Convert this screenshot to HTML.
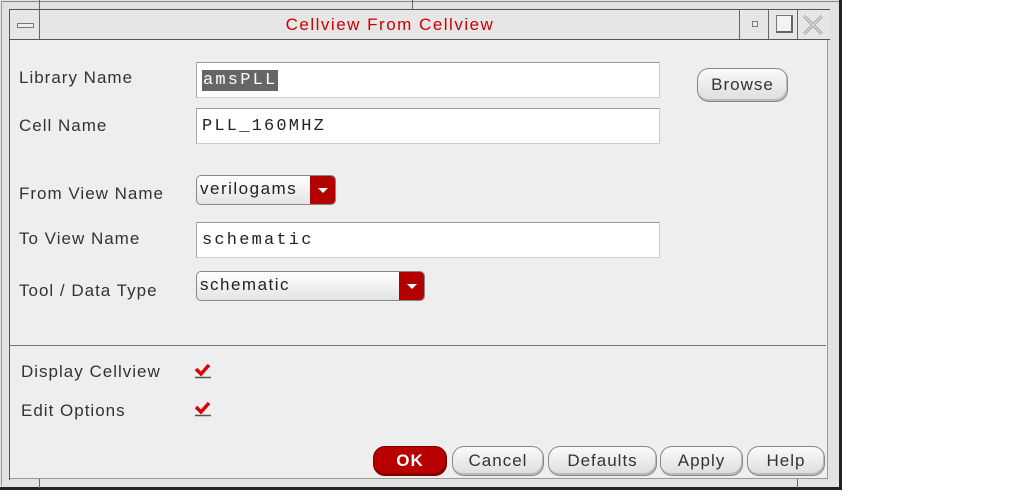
<!DOCTYPE html>
<html><head><style>
body{margin:0;width:1013px;height:497px;background:#fff;position:relative;overflow:hidden;font-family:"Liberation Sans",sans-serif;}
.a{position:absolute;box-sizing:border-box;}
.lbl{position:absolute;font-size:17px;color:#333;letter-spacing:1px;}
.fld{position:absolute;background:#fff;border:1px solid #ccc;border-top-color:#999;border-left-color:#aaa;box-sizing:border-box;font-family:"Liberation Mono",monospace;font-size:17px;letter-spacing:2.2px;color:#222;padding:10px 0 0 5px;}
.btn{position:absolute;box-sizing:border-box;border:1px solid #888;border-radius:12px;background:linear-gradient(#fafafa,#ddd);font-size:17px;letter-spacing:1px;color:#333;text-align:center;line-height:27px;box-shadow:inset -1px -2px 0 #bbb;}
.combo{position:absolute;box-sizing:border-box;border:1px solid #888;border-radius:5px;background:linear-gradient(#fff,#e4e4e4);font-size:17px;letter-spacing:1.5px;color:#222;padding:3px 0 0 3px;overflow:hidden;}
.combo .ar{position:absolute;right:0;top:0;bottom:0;width:25px;background:#b30000;}
.combo .ar:after{content:"";position:absolute;left:8px;top:12px;border-left:5px solid transparent;border-right:5px solid transparent;border-top:5px solid #fff;}
.chk{position:absolute;width:17px;height:17px;}
</style></head><body>
<div class="a" style="left:0;top:0;width:842px;height:490px;background:#e2e2e2;border-right:3px solid #222;border-bottom:3px solid #222;"></div>
<div class="a" style="top:1px;left:1px;width:838px;height:1px;background:#888"></div>
<div class="a" style="left:1px;top:1px;width:1px;height:485px;background:#999"></div>
<div class="a" style="left:9px;top:9px;width:821px;height:1px;background:#555"></div>
<div class="a" style="left:9px;top:9px;width:1px;height:471px;background:#555"></div>
<div class="a" style="left:9px;top:39px;width:821px;height:1px;background:#555"></div>
<div class="a" style="left:10px;top:40px;width:818px;height:439px;background:#eeeeee;border-right:1px solid #999;border-bottom:1px solid #999;"></div>
<div class="a" style="left:10px;top:10px;width:819px;height:29px;background:#e6e6e6"></div>
<div class="a" style="left:39px;top:10px;width:1px;height:29px;background:#666"></div>
<div class="a" style="left:17px;top:23px;width:17px;height:5px;background:#eee;border:1px solid #777"></div>
<div class="a" style="left:39px;top:0;width:1px;height:10px;background:#666"></div>
<div style="position:absolute;left:0;width:780px;top:15px;text-align:center;color:#c00;font-size:17px;letter-spacing:1.5px;">Cellview From Cellview</div>
<div class="a" style="left:739px;top:10px;width:1px;height:29px;background:#666"></div>
<div class="a" style="left:768px;top:10px;width:1px;height:29px;background:#666"></div>
<div class="a" style="left:797px;top:10px;width:1px;height:29px;background:#666"></div>
<div class="a" style="left:752px;top:21px;width:6px;height:6px;background:#eee;border:1px solid #777"></div>
<div class="a" style="left:776px;top:15px;width:17px;height:18px;border:1px solid #777;border-right:2px solid #666;border-bottom:2px solid #666;background:#f2f2f2"></div>
<svg class="a" style="left:800px;top:12px" width="26" height="26"><path d="M4 4L22 22M22 4L4 22" stroke="#999" stroke-width="3"/><path d="M4 4L22 22M22 4L4 22" stroke="#eee" stroke-width="1"/></svg>
<div class="a" style="left:412px;top:0;width:1px;height:10px;background:#666"></div>

<div class="lbl" style="left:19px;top:68px">Library Name</div>
<div class="fld" style="left:196px;top:62px;width:464px;height:36px;padding-top:8px"><span style="background:#666;color:#fff;padding:1px 1px">amsPLL</span></div>
<div class="btn" style="left:697px;top:68px;width:91px;height:34px;line-height:31px">Browse</div>
<div class="lbl" style="left:19px;top:116px">Cell Name</div>
<div class="fld" style="left:196px;top:108px;width:464px;height:36px;padding-top:8px">PLL_160MHZ</div>
<div class="lbl" style="left:19px;top:184px">From View Name</div>
<div class="combo" style="left:196px;top:175px;width:140px;height:30px">verilogams<div class="ar"></div></div>
<div class="lbl" style="left:19px;top:229px">To View Name</div>
<div class="fld" style="left:196px;top:222px;width:464px;height:36px;padding-top:8px">schematic</div>
<div class="lbl" style="left:19px;top:281px">Tool / Data Type</div>
<div class="combo" style="left:196px;top:271px;width:229px;height:30px">schematic<div class="ar"></div></div>

<div class="a" style="left:10px;top:345px;width:816px;height:1px;background:#777"></div>
<div class="lbl" style="left:21px;top:362px">Display Cellview</div>
<div class="lbl" style="left:21px;top:401px">Edit Options</div>
<svg class="chk" style="left:194px;top:362px" width="17" height="17"><path d="M2 7L7 12L15 3" stroke="#d00" stroke-width="3.5" fill="none"/><line x1="1" y1="15.5" x2="17" y2="15.5" stroke="#555" stroke-width="1.5"/></svg>
<svg class="chk" style="left:194px;top:400px" width="17" height="17"><path d="M2 7L7 12L15 3" stroke="#d00" stroke-width="3.5" fill="none"/><line x1="1" y1="15.5" x2="17" y2="15.5" stroke="#555" stroke-width="1.5"/></svg>

<div class="btn" style="left:373px;top:446px;width:74px;height:30px;background:#b80000;border-color:#700;color:#fff;font-weight:bold;box-shadow:inset -1px -2px 0 #800;">OK</div>
<div class="btn" style="left:452px;top:446px;width:92px;height:30px">Cancel</div>
<div class="btn" style="left:548px;top:446px;width:109px;height:30px">Defaults</div>
<div class="btn" style="left:660px;top:446px;width:83px;height:30px">Apply</div>
<div class="btn" style="left:747px;top:446px;width:78px;height:30px">Help</div>
<div class="a" style="left:39px;top:479px;width:1px;height:9px;background:#666"></div>
<div class="a" style="left:797px;top:479px;width:1px;height:9px;background:#666"></div>
</body></html>
